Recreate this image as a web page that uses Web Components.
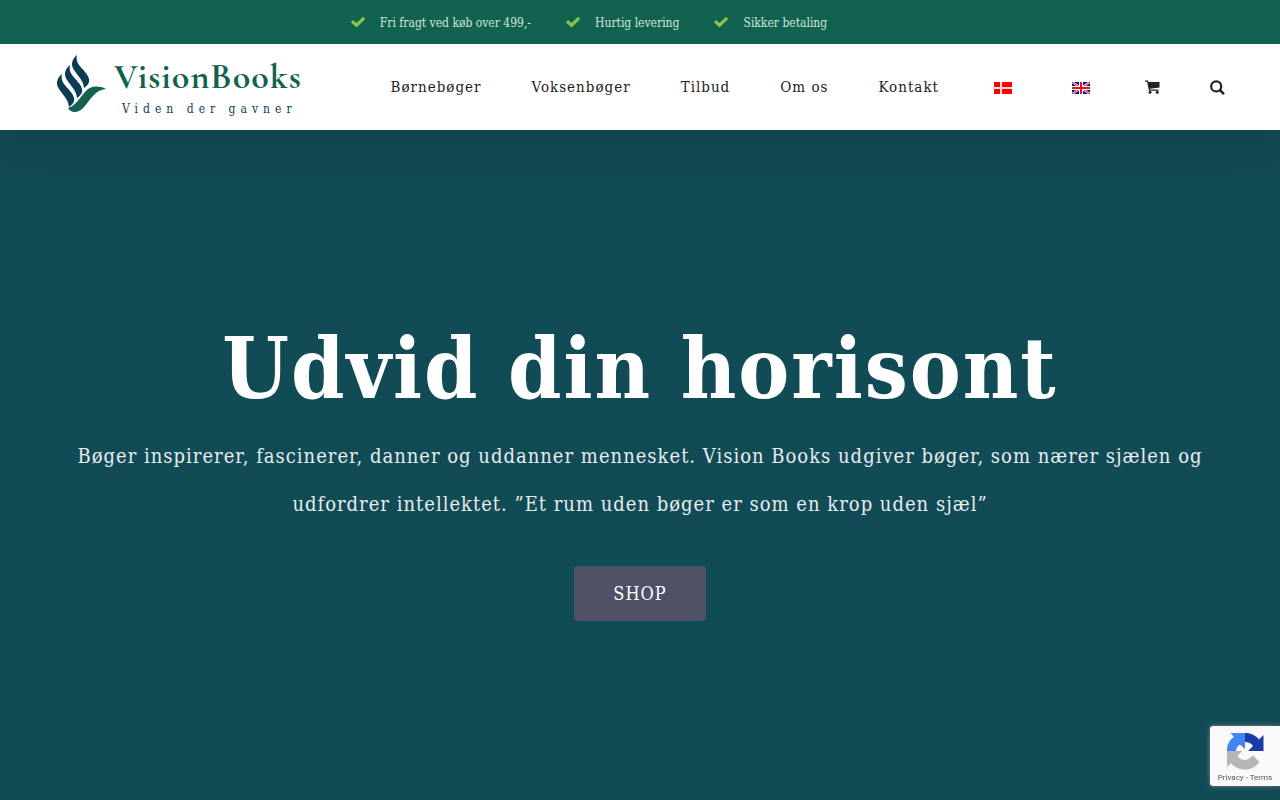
<!DOCTYPE html>
<html lang="da">
<head>
<meta charset="utf-8">
<meta name="viewport" content="width=device-width, initial-scale=1">
<title>VisionBooks – Viden der gavner</title>
<style>
  body { margin: 0; background: #114b55; font-family: "Roboto Slab", "DejaVu Serif Condensed", "DejaVu Serif", serif; }
</style>
</head>
<body>
<vb-page></vb-page>

<template id="t-page">
  <style>
    :host { display: flex; flex-direction: column; min-height: 100vh; }
    vb-hero { flex: 1; }
  </style>
  <vb-topbar>
    <vb-benefit>Fri fragt ved køb over 499,-</vb-benefit>
    <vb-benefit>Hurtig levering</vb-benefit>
    <vb-benefit>Sikker betaling</vb-benefit>
  </vb-topbar>
  <vb-header></vb-header>
  <vb-hero>
    <span slot="title">Udvid din horisont</span>
    Bøger inspirerer, fascinerer, danner og uddanner mennesket. Vision Books udgiver bøger, som nærer sjælen og udfordrer intellektet. ”Et rum uden bøger er som en krop uden sjæl”
    <span slot="action">SHOP</span>
  </vb-hero>
  <vb-captcha></vb-captcha>
</template>

<template id="t-topbar">
  <style>
    :host { display: flex; justify-content: center; gap: 35px; padding: 11px 102px 9px 0; position: relative; z-index: 2; background: #116350; color: #d3e4df; font-size: 12px; line-height: 24px; }
  </style>
  <slot></slot>
</template>

<template id="t-benefit">
  <style>
    :host { display: flex; align-items: center; gap: 14px; white-space: nowrap; }
    svg { width: 15px; height: 14px; }
  </style>
  <svg viewBox="0 0 15 14" aria-hidden="true"><path d="M1 5.200 5.500 9.200 13.200 1.800" fill="none" stroke="#8bc34a" stroke-width="3.200"/></svg>
  <span><slot></slot></span>
</template>

<template id="t-logo">
  <style>
    :host { display: block; }
    a { display: flex; align-items: center; gap: 8px; color: #116350; text-decoration: none; white-space: nowrap; }
    svg { width: 50px; height: 64px; }
    .words { display: flex; flex-direction: column; }
    b { font: bold 36px/44px "Cormorant Garamond", "Liberation Serif", serif; letter-spacing: 1px; }
    small { padding-left: 8px; font-size: 12px; line-height: 20px; letter-spacing: 5px; color: #0c3c55; }
  </style>
  <a href="#">
    <svg viewBox="0 0 50 64" aria-hidden="true">
      <g fill="#0c3c55">
        <path d="M21 0c-4 3-6 8-4.500 12c2 6 11 12 11.500 21c3-2 6-5 5-9c-1-5-7-10-10-14c-2-3-3-6-2-10z"/>
        <path d="M14 10c-4 3-6 8-4.500 12c2 6 11 12 11.500 21c3-2 6-5 5-9c-1-5-7-10-10-14c-2-3-3-6-2-10z"/>
        <path d="M6 19c-4 3-6 8-4.500 12c2 6 11 12 11.500 21c3-2 6-5 5-9c-1-5-7-10-10-14c-2-3-3-6-2-10z"/>
      </g>
      <path fill="#116350" d="M50 34C42 30 34 31 29 37C23 44 19 51 12 53C15 59 23 58 28 52C35 44 39 35 50 34Z"/>
    </svg>
    <span class="words"><b>VisionBooks</b><small>Viden der gavner</small></span>
  </a>
</template>

<template id="t-header">
  <style>
    :host { display: flex; align-items: center; justify-content: space-between; gap: 24px; padding: 10px 55px 10px 56px; background: #fff; position: relative; z-index: 1; box-shadow: 0 10px 50px rgba(0, 0, 0, .15); }
    nav { display: flex; align-items: center; gap: 50px; min-height: 66px; }
    a { color: #222; font-size: 15px; line-height: 24px; letter-spacing: 1px; text-decoration: none; white-space: nowrap; }
    a.flag { margin: 0 5px; }
    a.flag, a.icon { display: flex; }
  </style>
  <vb-logo></vb-logo>
  <nav aria-label="Hovedmenu">
    <a href="#">Børnebøger</a>
    <a href="#">Voksenbøger</a>
    <a href="#">Tilbud</a>
    <a href="#">Om os</a>
    <a href="#">Kontakt</a>
    <a class="flag" href="#" aria-label="Dansk"><svg width="18" height="14" viewBox="0 -2 18 14"><path fill="#f00" d="M0 0h18v12H0z"/><path fill="#fff" fill-opacity=".85" d="M6 0h2v5h10v2H8v5H6V7H0V5h6z"/></svg></a>
    <a class="flag" href="#" aria-label="English"><svg width="18" height="14" viewBox="0 -2 18 14"><path fill="#00107a" d="M0 0h18v12H0z"/><path stroke="#fff" stroke-width="2.200" d="M0 0 18 12M18 0 0 12"/><path stroke="#e01020" stroke-width="1" d="M0 0 18 12M18 0 0 12"/><path fill="#fff" d="M7 0h4v12H7zM0 4h18v4H0z"/><path fill="#e01020" d="M8 0h2v12H8zM0 5h18v2H0z"/></svg></a>
    <a class="icon" href="#" aria-label="Kurv"><svg width="15" height="14" viewBox="0 0 15 14"><path fill="#222" d="M0 .5h3L3.500 2H14.500V7.500L5 8.700 5.200 9.500H13.500V10.700H4L2.100 1.700H0Z"/><circle cx="5" cy="12.200" r="1.500" fill="#222"/><circle cx="12.300" cy="12.200" r="1.500" fill="#222"/></svg></a>
    <a class="icon" href="#" aria-label="Søg"><svg width="15" height="15" viewBox="0 0 15 15"><circle cx="6.200" cy="6.400" r="5" fill="none" stroke="#222" stroke-width="2.200"/><path d="M10 10.200 13.200 13.400" stroke="#222" stroke-width="2.600" stroke-linecap="round"/></svg></a>
  </nav>
</template>

<template id="t-hero">
  <style>
    :host { display: flex; flex-direction: column; align-items: center; justify-content: center; padding: 20px 56px; box-sizing: border-box; background: #114b55; color: #fff; text-align: center; }
    h1 { margin: 0; font-size: 85px; line-height: 116px; font-weight: 700; letter-spacing: 2px; }
    p { margin: 6px 0 38px; color: #e7edee; font-size: 20px; line-height: 48px; font-weight: 300; letter-spacing: 1px; }
    button { padding: 15px 39px; border: 0; border-radius: 3px; background: #4f5165; color: #fff; font: 18px/25px "Roboto Slab", "DejaVu Serif Condensed", "DejaVu Serif", serif; letter-spacing: 1px; cursor: pointer; }
  </style>
  <h1><slot name="title"></slot></h1>
  <p><slot></slot></p>
  <button type="button"><slot name="action"></slot></button>
</template>

<template id="t-captcha">
  <style>
    :host { position: fixed; right: 0; bottom: 14px; z-index: 2; display: flex; flex-direction: column; align-items: center; width: 70px; height: 60px; box-sizing: border-box; padding: 6px 0 0; background: #f9f9f9; border-radius: 3px 0 0 3px; box-shadow: 0 0 5px #808080; font-family: Roboto, sans-serif; }
    svg { width: 38px; height: 38px; }
    div { color: #555; font-size: 8px; line-height: 15px; white-space: nowrap; }
    a { color: inherit; text-decoration: none; }
  </style>
  <svg viewBox="0 0 38 38" aria-hidden="true">
    <path fill="#1c3aa9" d="M19 1C25 1 30 3.500 33 7.500L37.500 3V19H22L27 14C25 11 22.500 10 19 10Z"/>
    <path fill="#4285f4" d="M19 1H4.500L8 5C3 8 1 13 1 19H10C10 16 12 13.500 14 12.500L19 17Z"/>
    <path fill="#b5b5b5" d="M1 19H16L11.500 24C14 28.500 20 29.500 24 26L27 23.500 33.500 30C29 36 23 37.500 19 37.500C13 37.500 8 35 5 31L1 35Z"/>
  </svg>
  <div><a href="#">Privacy</a> - <a href="#">Terms</a></div>
</template>

<script>
  const define = (name) => {
    const template = document.getElementById('t-' + name);
    customElements.define('vb-' + name, class extends HTMLElement {
      constructor() {
        super();
        this.attachShadow({ mode: 'open' }).append(document.importNode(template.content, true));
      }
    });
  };
  ['topbar', 'benefit', 'logo', 'header', 'hero', 'captcha', 'page'].forEach(define);
</script>
</body>
</html>
